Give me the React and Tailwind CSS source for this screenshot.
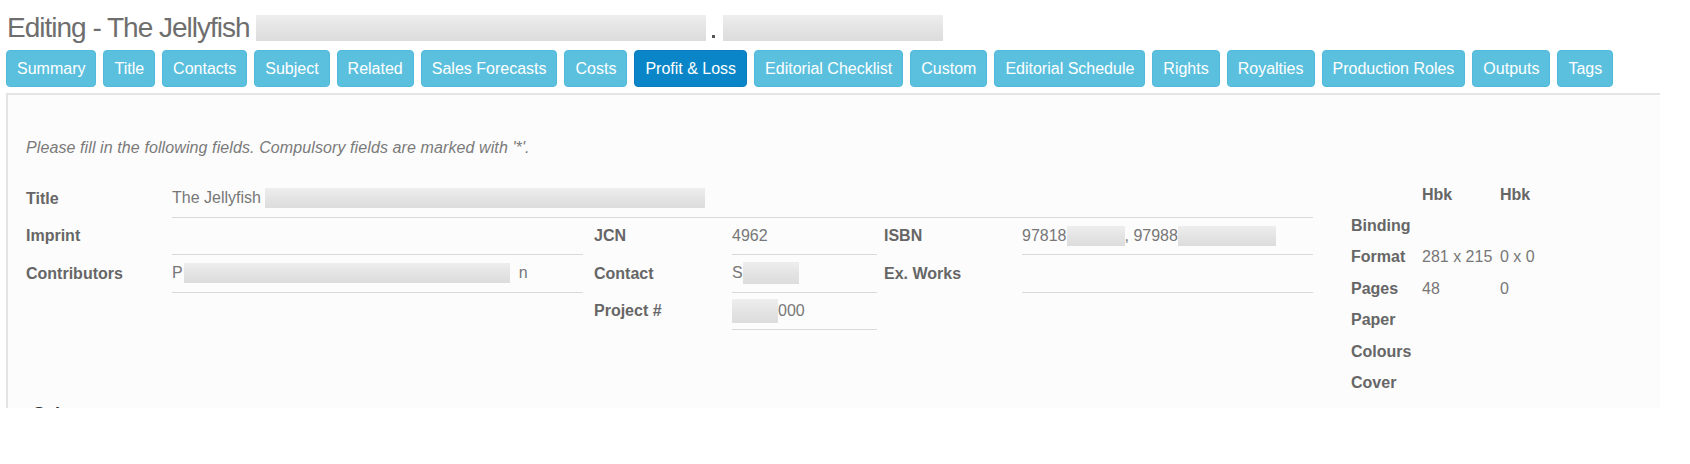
import React from 'react';

const tabs = [
  'Summary', 'Title', 'Contacts', 'Subject', 'Related', 'Sales Forecasts', 'Costs',
  'Profit & Loss', 'Editorial Checklist', 'Custom', 'Editorial Schedule', 'Rights',
  'Royalties', 'Production Roles', 'Outputs', 'Tags',
];

// grey pixelated block standing in for redacted text
const Smudge = ({ className = '' }) => (
  <span className={'inline-block align-middle bg-gradient-to-b from-[#eeeeee] via-[#e4e4e4] to-[#dcdcdc] ' + className} />
);

const Label = ({ children, className = '' }) => (
  <div className={'flex h-[37.5px] items-center font-bold text-[#666] ' + className}>{children}</div>
);

const Value = ({ children, className = '' }) => (
  <div className={'flex h-[37.5px] items-center border-b border-[#d9d9d9] text-[#777] ' + className}>{children}</div>
);

const specs = [
  ['Binding', '', ''],
  ['Format', '281 x 215', '0 x 0'],
  ['Pages', '48', '0'],
  ['Paper', '', ''],
  ['Colours', '', ''],
  ['Cover', '', ''],
];

export default function App() {
  return (
    <div className="h-[464px] w-[1690px] overflow-hidden bg-white font-['Liberation_Sans',Arial,sans-serif] text-[16px]">
      {/* page title */}
      <div className="flex h-[50px] items-start pl-[7px] pt-[11px]">
        <h1 className="flex items-center text-[28px] leading-[34px] tracking-[-1px] text-[#6e6e6e]">
          Editing - The Jellyfish
          <Smudge className="ml-[6px] h-[26px] w-[450px]" />
          <span className="ml-[6px] mt-[16px] h-[3px] w-[3px] bg-[#555]" />
          <Smudge className="ml-[8px] h-[26px] w-[220px]" />
        </h1>
      </div>

      {/* tab buttons */}
      <div className="flex gap-[7px] pl-[6px]">
        {tabs.map((t) => (
          <button
            key={t}
            className={
              t === 'Profit & Loss'
                ? 'h-[37px] rounded-[4px] border border-[#0b7cbd] bg-[#0a86c8] px-[10px] text-white'
                : 'h-[37px] rounded-[4px] border border-[#4fbadb] bg-[#5bc0de] px-[10px] text-white'
            }
          >
            {t}
          </button>
        ))}
      </div>

      {/* form panel */}
      <div className="ml-[6px] mt-[6px] h-[315px] w-[1654px] overflow-hidden border-l-2 border-t-2 border-[#e4e4e4] bg-[#fcfcfc] pl-[18px] pt-[44px]">
        <p className="italic leading-[18px] tracking-[0.1px] text-[#7a7a7a]">
          Please fill in the following fields. Compulsory fields are marked with '*'.
        </p>

        <div className="mt-[20px] flex items-start">
          <div className="mt-[3px] grid grid-cols-[146px_411px_11px_138px_145px_7px_138px_291px]">
            <Label>Title</Label>
            <Value className="col-span-7">
              The Jellyfish
              <Smudge className="ml-[4px] h-[20px] w-[440px]" />
            </Value>

            <Label>Imprint</Label>
            <Value />
            <div />
            <Label>JCN</Label>
            <Value>4962</Value>
            <div />
            <Label>ISBN</Label>
            <Value>
              97818
              <Smudge className="h-[20px] w-[58px]" />
              , 97988
              <Smudge className="h-[20px] w-[98px]" />
            </Value>

            <Label>Contributors</Label>
            <Value>
              P
              <Smudge className="ml-[1px] h-[20px] w-[326px]" />
              <span className="ml-[9px]">n</span>
            </Value>
            <div />
            <Label>Contact</Label>
            <Value>
              S
              <Smudge className="h-[22px] w-[56px]" />
            </Value>
            <div />
            <Label>Ex. Works</Label>
            <Value />

            <Label className="col-start-4">Project #</Label>
            <Value>
              <Smudge className="h-[24px] w-[46px]" />
              000
            </Value>
          </div>

          {/* format spec table */}
          <div className="ml-[38px] mt-[2px] grid grid-cols-[71px_78px_80px] auto-rows-[31.4px] items-center">
            <div />
            <div className="font-bold text-[#666]">Hbk</div>
            <div className="font-bold text-[#666]">Hbk</div>
            {specs.map(([k, a, b]) => (
              <React.Fragment key={k}>
                <div className="font-bold text-[#666]">{k}</div>
                <div className="text-[#777]">{a}</div>
                <div className="text-[#777]">{b}</div>
              </React.Fragment>
            ))}
          </div>
        </div>

        <h3 className="ml-[7px] mt-[2px] text-[18px] font-bold text-[#333]">Sales</h3>
      </div>
    </div>
  );
}
